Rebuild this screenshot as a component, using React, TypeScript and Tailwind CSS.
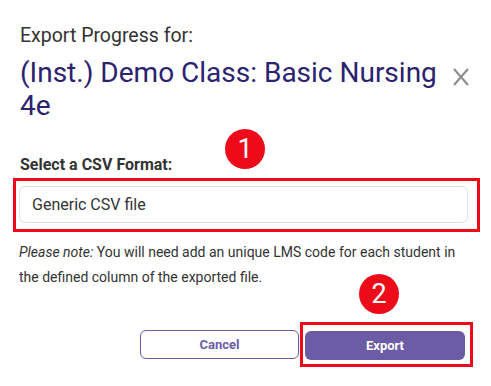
import React from 'react';

const Callout: React.FC<{ n: number; className: string }> = ({ n, className }) => (
  <div
    className={`absolute w-10 h-10 rounded-full bg-[#ee0b19] text-white flex items-center justify-center text-[27px] leading-none ${className}`}
  >
    {n}
  </div>
);

export default function App() {
  return (
    <div className="relative w-[491px] h-[386px] bg-white overflow-hidden font-['Roboto',sans-serif] text-[#333]">
      <div className="pl-5 pt-6">
        <div className="flex justify-between">
          <div>
            <div className="text-[19.5px] leading-6 text-[#333]">Export Progress for:</div>
            <div className="mt-2 text-[28px] leading-[33px] text-[#2b2270]">
              (Inst.) Demo Class: Basic Nursing
              <br />
              4e
            </div>
          </div>
          <button className="mt-[44px] mr-[22px] w-4 h-[18px] self-start">
            <svg width="16" height="18" viewBox="0 0 16 18" className="block">
              <path d="M1 1 L15 17 M15 1 L1 17" stroke="#8a8a8a" strokeWidth="2" fill="none" />
            </svg>
          </button>
        </div>

        <div className="mt-[33px] text-[16px] leading-5 font-bold text-[#333]">Select a CSV Format:</div>
      </div>

      <div className="mt-[3px] ml-[13px] mr-[11px] border-[3px] border-[#ee0b19] pl-[3px] pr-[9px] pt-[5px] pb-[6px]">
        <div className="h-[37px] border border-[#dedede] rounded-md flex items-center pl-[12px] text-[16px] text-[#333]">
          Generic CSV file
        </div>
      </div>

      <p className="mt-[8px] pl-[19px] pr-8 text-[14px] leading-[25px] text-[#333]">
        <i>Please note:</i> You will need add an unique LMS code for each student in the defined column of the
        exported file.
      </p>

      <div className="mt-[32px] flex justify-end items-center pr-[18px]">
        <button className="w-[159px] h-[29px] border border-[#6b5ca5] rounded-md text-[#6b5ca5] text-[13px] font-bold">
          Cancel
        </button>
        <div className="ml-[1px] border-[3px] border-[#ee0b19] pl-[2px] pr-[5px] pt-[6px] pb-[4px]">
          <button className="block w-[160px] h-[29px] bg-[#6b5ca5] rounded-md text-white text-[13px] font-bold">
            Export
          </button>
        </div>
      </div>

      <Callout n={1} className="left-[225px] top-[129px]" />
      <Callout n={2} className="left-[359px] top-[274px]" />
    </div>
  );
}
